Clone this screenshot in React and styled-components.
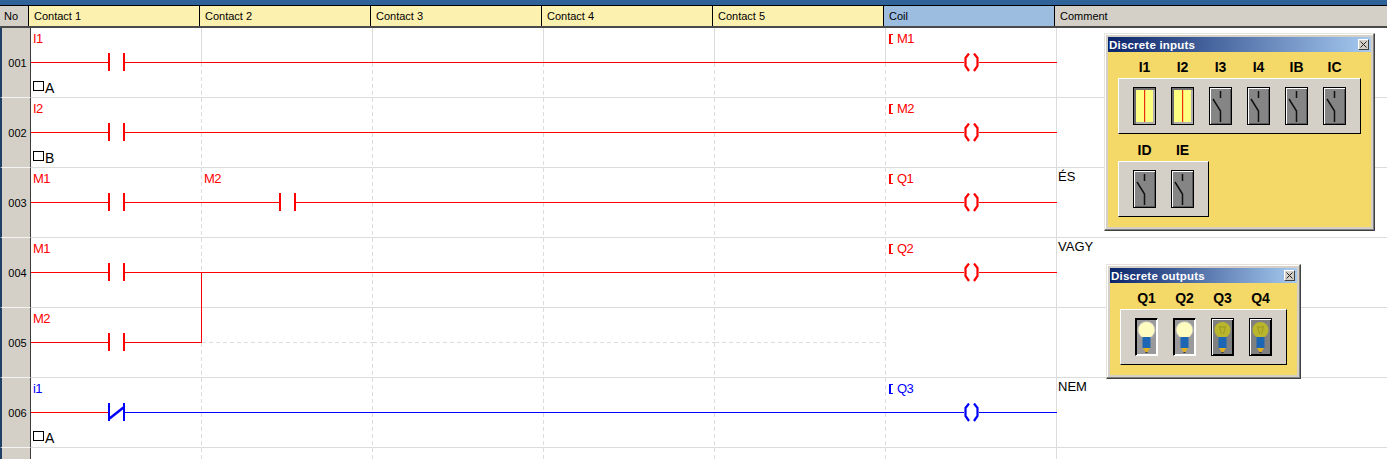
import React from 'react'
import styled, { createGlobalStyle, css } from 'styled-components'

const RED = '#ff0000'
const BLUE = '#0000ff'
const GRID = '#dcdcdc'

const rungs = [
  { no: '001', label: 'I1', coil: 'M1', marker: 'A', contacts: 1, solidTop: true },
  { no: '002', label: 'I2', coil: 'M2', marker: 'B', contacts: 1 },
  { no: '003', label: 'M1', second: 'M2', coil: 'Q1', comment: 'ÉS', contacts: 2 },
  { no: '004', label: 'M1', coil: 'Q2', comment: 'VAGY', contacts: 1, branch: 'down' },
  { no: '005', label: 'M2', contacts: 1, branch: 'up', open: true },
  { no: '006', label: 'i1', coil: 'Q3', comment: 'NEM', marker: 'A', contacts: 1, inverted: true },
]

const GlobalStyle = createGlobalStyle`
  html, body {
    margin: 0;
    padding: 0;
    background: #fff;
    overflow: hidden;
  }
  * { box-sizing: border-box; }
`

const Page = styled.div`
  position: relative;
  width: 1387px;
  height: 459px;
  overflow: hidden;
  font-family: "Liberation Sans", Arial, sans-serif;
`

const TopBar = styled.div`
  height: 6px;
  background: #2f6299;
  border-bottom: 1px solid #000;
`

const Header = styled.div`
  display: grid;
  grid-template-columns: 29px repeat(6, 171px) 1fr;
  height: 22px;
  background: #d4d0c8;
  border-bottom: 3px solid #4a4a4a;
`

const HeaderCell = styled.div`
  padding-left: ${p => p.$pad || 5}px;
  font-size: 11px;
  line-height: 20px;
  color: #000;
  background: ${p => p.$bg || '#d4d0c8'};
  border-right: ${p => (p.$last ? 'none' : '1px solid #000')};
`

const Row = styled.div`
  display: grid;
  grid-template-columns: 31px repeat(6, 171px) 1fr;
  height: ${p => (p.$stub ? 11 : 70)}px;
`

const NoCell = styled.div`
  display: flex;
  align-items: center;
  justify-content: center;
  padding-left: 3px;
  font-size: 11px;
  background: #d4d0c8;
  border-left: 2px solid #1f3f66;
  border-right: 1px solid #3a3a3a;
  border-bottom: ${p => (p.$stub ? 'none' : '1px solid #f4f4f4')};
`

const dashes = css`
  repeating-linear-gradient(to bottom, ${GRID} 0 4px, transparent 4px 7px) right top / 1px 100% no-repeat
`

const Cell = styled.div`
  position: relative;
  display: grid;
  grid-template-rows: 25px 19px 1fr;
  border-bottom: 1px solid ${GRID};
  background: ${p => (p.$solidTop ? `linear-gradient(${GRID}, ${GRID}) right top / 1px 34px no-repeat,` : '')} ${dashes};

  ${p => p.$branch && css`
    &::after {
      content: '';
      position: absolute;
      right: 0;
      width: 1px;
      background: ${RED};
      ${p.$branch === 'down' ? 'top: 34px; bottom: -1px;' : 'top: 0; height: 35px;'}
    }
  `}
`

const CoilCell = styled(Cell)`
  background: linear-gradient(${GRID}, ${GRID}) right top / 1px 100% no-repeat;
`

const CommentCell = styled.div`
  padding: 1px 0 0 1px;
  font-size: 13px;
  line-height: 15px;
  color: #000;
  border-bottom: ${p => (p.$stub ? 'none' : `1px solid ${GRID}`)};
`

const Label = styled.div`
  padding: 4px 0 0 2px;
  font-size: 13px;
  letter-spacing: -0.6px;
  line-height: 14px;
  color: ${p => p.$color};
`

const CoilLabel = styled(Label)`
  display: flex;
  gap: 4px;
`

const Bracket = styled.span`
  display: block;
  width: 4px;
  height: 10px;
  margin: 2px 0 0 1px;
  border: 1px solid ${p => p.$color};
  border-right: none;
  border-left-width: 2px;
`

const Rung = styled.div`
  display: flex;
  align-items: center;
`

const Wire = styled.div`
  flex: ${p => (p.$width ? `0 0 ${p.$width}px` : 1)};
  height: 1px;
  background: ${p => (p.$dashed
    ? `repeating-linear-gradient(to right, ${GRID} 0 4px, transparent 4px 7px)`
    : p.$color)};
`

const Marker = styled.div`
  display: flex;
  align-items: flex-start;
  padding: 9px 0 0 2px;
`

const MarkerBox = styled.span`
  display: block;
  width: 11px;
  height: 10px;
  border: 1px solid #000;
`

const MarkerLetter = styled.span`
  margin: 0 0 0 1px;
  font-size: 14px;
  line-height: 15px;
  color: #000;
`

const Panel = styled.div`
  position: absolute;
  left: ${p => p.$left}px;
  top: ${p => p.$top}px;
  width: ${p => p.$width}px;
  height: ${p => p.$height}px;
  display: flex;
  flex-direction: column;
  padding: 3px;
  background: #d4d0c8;
  border: 1px solid;
  border-color: #e6e3dd #404040 #404040 #e6e3dd;
  box-shadow: inset -1px -1px 0 #808080, inset 1px 1px 0 #fff;
`

const TitleBar = styled.div`
  display: flex;
  align-items: center;
  justify-content: space-between;
  height: 15px;
  padding: 0 2px 0 1px;
  background: linear-gradient(to right, #0a246a, #a6caf0);
`

const Title = styled.span`
  font-size: 11.5px;
  font-weight: bold;
  letter-spacing: 0.2px;
  color: #fff;
`

const CloseButton = styled.span`
  display: flex;
  align-items: center;
  justify-content: center;
  width: 11px;
  height: 11px;
  background: #d4d0c8;
  border: 1px solid;
  border-color: #fff #404040 #404040 #fff;
`

const PanelBody = styled.div`
  flex: 1;
  display: flex;
  flex-direction: column;
  gap: 9px;
  padding: 8px 10px 0;
  background: #f4d868;
`

const Section = styled.div`
  display: flex;
  flex-direction: column;
  align-items: flex-start;
`

const Tags = styled.div`
  display: flex;
  gap: 15px;
  height: 18px;
  padding-left: 15px;
`

const Tag = styled.span`
  width: 23px;
  text-align: center;
  font-size: 14px;
  font-weight: bold;
  line-height: 15px;
  color: #000;
`

const Group = styled.div`
  display: flex;
  align-items: center;
  gap: 15px;
  height: 56px;
  padding: 0 14px;
  background: #d4d0c8;
  border: 1px solid;
  border-color: #fff #000 #000 #fff;
`

const Toggle = styled.div`
  width: 23px;
  height: 38px;
  background: ${p => (p.$on ? '#ffff80' : '#858585')};
  border: 1px solid #000;
  box-shadow: ${p => (p.$on
    ? 'inset 2px 2px 0 #6e6e6e, inset -2px -2px 0 #b0b0b0'
    : 'inset 1px 1px 0 #fff, inset -1px -1px 0 #5a5a5a')};
  svg { display: block; }
`

const Lamp = styled.div`
  width: 23px;
  height: 38px;
  background: ${p => (p.$on ? '#9a9a9a' : '#808080')};
  border: 1px solid;
  border-color: ${p => (p.$on ? '#000 #fff #fff #000' : '#fff #000 #000 #fff')};
  box-shadow: ${p => (p.$on
    ? 'inset 1px 1px 0 #000, inset -1px -1px 0 #fff'
    : 'inset 1px 1px 0 #fff, inset -1px -1px 0 #000')};
  outline: 1px solid ${p => (p.$on ? 'transparent' : '#000')};
  outline-offset: -1px;
  svg { display: block; }
`

function ContactIcon({ color, inverted }) {
  return (
    <svg width="17" height="19" viewBox="0 0 17 19" style={{ flex: 'none' }}>
      <rect x="0" y="0" width="2" height="18" fill={color} />
      <rect x="15" y="0" width="2" height="18" fill={color} />
      {inverted && <path d="M1.5 15.5 L15.5 4.5" stroke={color} strokeWidth="2.5" fill="none" />}
    </svg>
  )
}

function CoilIcon({ color }) {
  return (
    <svg width="15" height="19" viewBox="0 0 15 19" style={{ flex: 'none' }}>
      <path d="M5 0.5 L1.5 5 V13 L5 18" stroke={color} strokeWidth="2.2" fill="none" />
      <path d="M10 0.5 L13.5 5 V13 L10 18" stroke={color} strokeWidth="2.2" fill="none" />
    </svg>
  )
}

function SwitchIcon({ on }) {
  if (on) {
    return (
      <svg width="21" height="36" viewBox="0 0 21 36">
        <rect x="10" y="2" width="1.2" height="32" fill="#e8300f" />
      </svg>
    )
  }
  return (
    <svg width="21" height="36" viewBox="0 0 21 36">
      <path d="M10.5 3 V10 M3 11 L10.5 23 V34" stroke="#111" strokeWidth="1.5" fill="none" />
    </svg>
  )
}

function LampIcon({ on }) {
  const glass = on ? '#fffcc0' : '#b9b52c'
  return (
    <svg width="21" height="36" viewBox="0 0 21 36">
      {on && <circle cx="10.5" cy="11" r="9" fill="#fff" opacity="0.35" />}
      <circle cx="10.5" cy="11" r="8" fill={glass} />
      {!on && <path d="M7.5 7 L9.5 15 M13.5 7 L11.5 15 M7.5 8 H13.5" stroke="#9c9920" strokeWidth="1" fill="none" />}
      <rect x="6.5" y="18" width="8" height="11" fill="#1c66b4" />
      <path d="M7 29 H14 L11.5 33 H9.5 Z" fill="#e0b020" />
      <rect x="9.5" y="33" width="2" height="1" fill="#333" />
    </svg>
  )
}

function CloseIcon() {
  return (
    <svg width="7" height="7" viewBox="0 0 7 7">
      <path d="M0.5 0.5 L6.5 6.5 M6.5 0.5 L0.5 6.5" stroke="#222" strokeWidth="1" />
    </svg>
  )
}

function RungRow({ rung }) {
  const color = rung.inverted ? BLUE : RED
  return (
    <Row>
      <NoCell>{rung.no}</NoCell>
      {[0, 1, 2, 3, 4].map(i => {
        const hasContact = i < rung.contacts
        const label = i === 0 ? rung.label : i === 1 ? rung.second : null
        const beforeColor = i === 0 ? RED : color
        return (
          <Cell
            key={i}
            $solidTop={rung.solidTop}
            $branch={i === 0 ? rung.branch : undefined}
          >
            <Label $color={color}>{label}</Label>
            <Rung>
              {hasContact ? (
                <>
                  <Wire $width={77} $color={beforeColor} />
                  <ContactIcon color={color} inverted={rung.inverted} />
                  <Wire $color={color} />
                </>
              ) : rung.open ? (
                <Wire $dashed />
              ) : (
                <Wire $color={color} />
              )}
            </Rung>
            {i === 0 && rung.marker ? (
              <Marker>
                <MarkerBox />
                <MarkerLetter>{rung.marker}</MarkerLetter>
              </Marker>
            ) : <div />}
          </Cell>
        )
      })}
      <CoilCell>
        {rung.coil ? (
          <CoilLabel $color={color}>
            <Bracket $color={color} />
            {rung.coil}
          </CoilLabel>
        ) : <div />}
        <Rung>
          {rung.coil && (
            <>
              <Wire $width={78} $color={color} />
              <CoilIcon color={color} />
              <Wire $color={color} />
            </>
          )}
        </Rung>
      </CoilCell>
      <CommentCell>{rung.comment}</CommentCell>
    </Row>
  )
}

function Inputs({ items }) {
  return (
    <Section>
      <Tags>{items.map(i => <Tag key={i.name}>{i.name}</Tag>)}</Tags>
      <Group>
        {items.map(i => (
          <Toggle key={i.name} $on={i.on}><SwitchIcon on={i.on} /></Toggle>
        ))}
      </Group>
    </Section>
  )
}

export default function App() {
  return (
    <Page>
      <GlobalStyle />
      <TopBar />
      <Header>
        <HeaderCell $pad={4}>No</HeaderCell>
        <HeaderCell $bg="#fdf1b0">Contact 1</HeaderCell>
        <HeaderCell $bg="#fdf1b0">Contact 2</HeaderCell>
        <HeaderCell $bg="#fdf1b0">Contact 3</HeaderCell>
        <HeaderCell $bg="#fdf1b0">Contact 4</HeaderCell>
        <HeaderCell $bg="#fdf1b0">Contact 5</HeaderCell>
        <HeaderCell $bg="#9dbde0">Coil</HeaderCell>
        <HeaderCell $last>Comment</HeaderCell>
      </Header>
      {rungs.map(r => <RungRow key={r.no} rung={r} />)}
      <Row $stub>
        <NoCell $stub />
        {[0, 1, 2, 3, 4].map(i => (
          <Cell key={i} />
        ))}
        <CoilCell />
        <CommentCell $stub />
      </Row>

      <Panel $left={1104} $top={33} $width={271} $height={198}>
        <TitleBar>
          <Title>Discrete inputs</Title>
          <CloseButton><CloseIcon /></CloseButton>
        </TitleBar>
        <PanelBody>
          <Inputs items={[
            { name: 'I1', on: true },
            { name: 'I2', on: true },
            { name: 'I3' },
            { name: 'I4' },
            { name: 'IB' },
            { name: 'IC' },
          ]} />
          <Inputs items={[{ name: 'ID' }, { name: 'IE' }]} />
        </PanelBody>
      </Panel>

      <Panel $left={1106} $top={264} $width={195} $height={115}>
        <TitleBar>
          <Title>Discrete outputs</Title>
          <CloseButton><CloseIcon /></CloseButton>
        </TitleBar>
        <PanelBody>
          <Section>
            <Tags>
              {['Q1', 'Q2', 'Q3', 'Q4'].map(n => <Tag key={n}>{n}</Tag>)}
            </Tags>
            <Group>
              {[true, true, false, false].map((on, i) => (
                <Lamp key={i} $on={on}><LampIcon on={on} /></Lamp>
              ))}
            </Group>
          </Section>
        </PanelBody>
      </Panel>
    </Page>
  )
}
